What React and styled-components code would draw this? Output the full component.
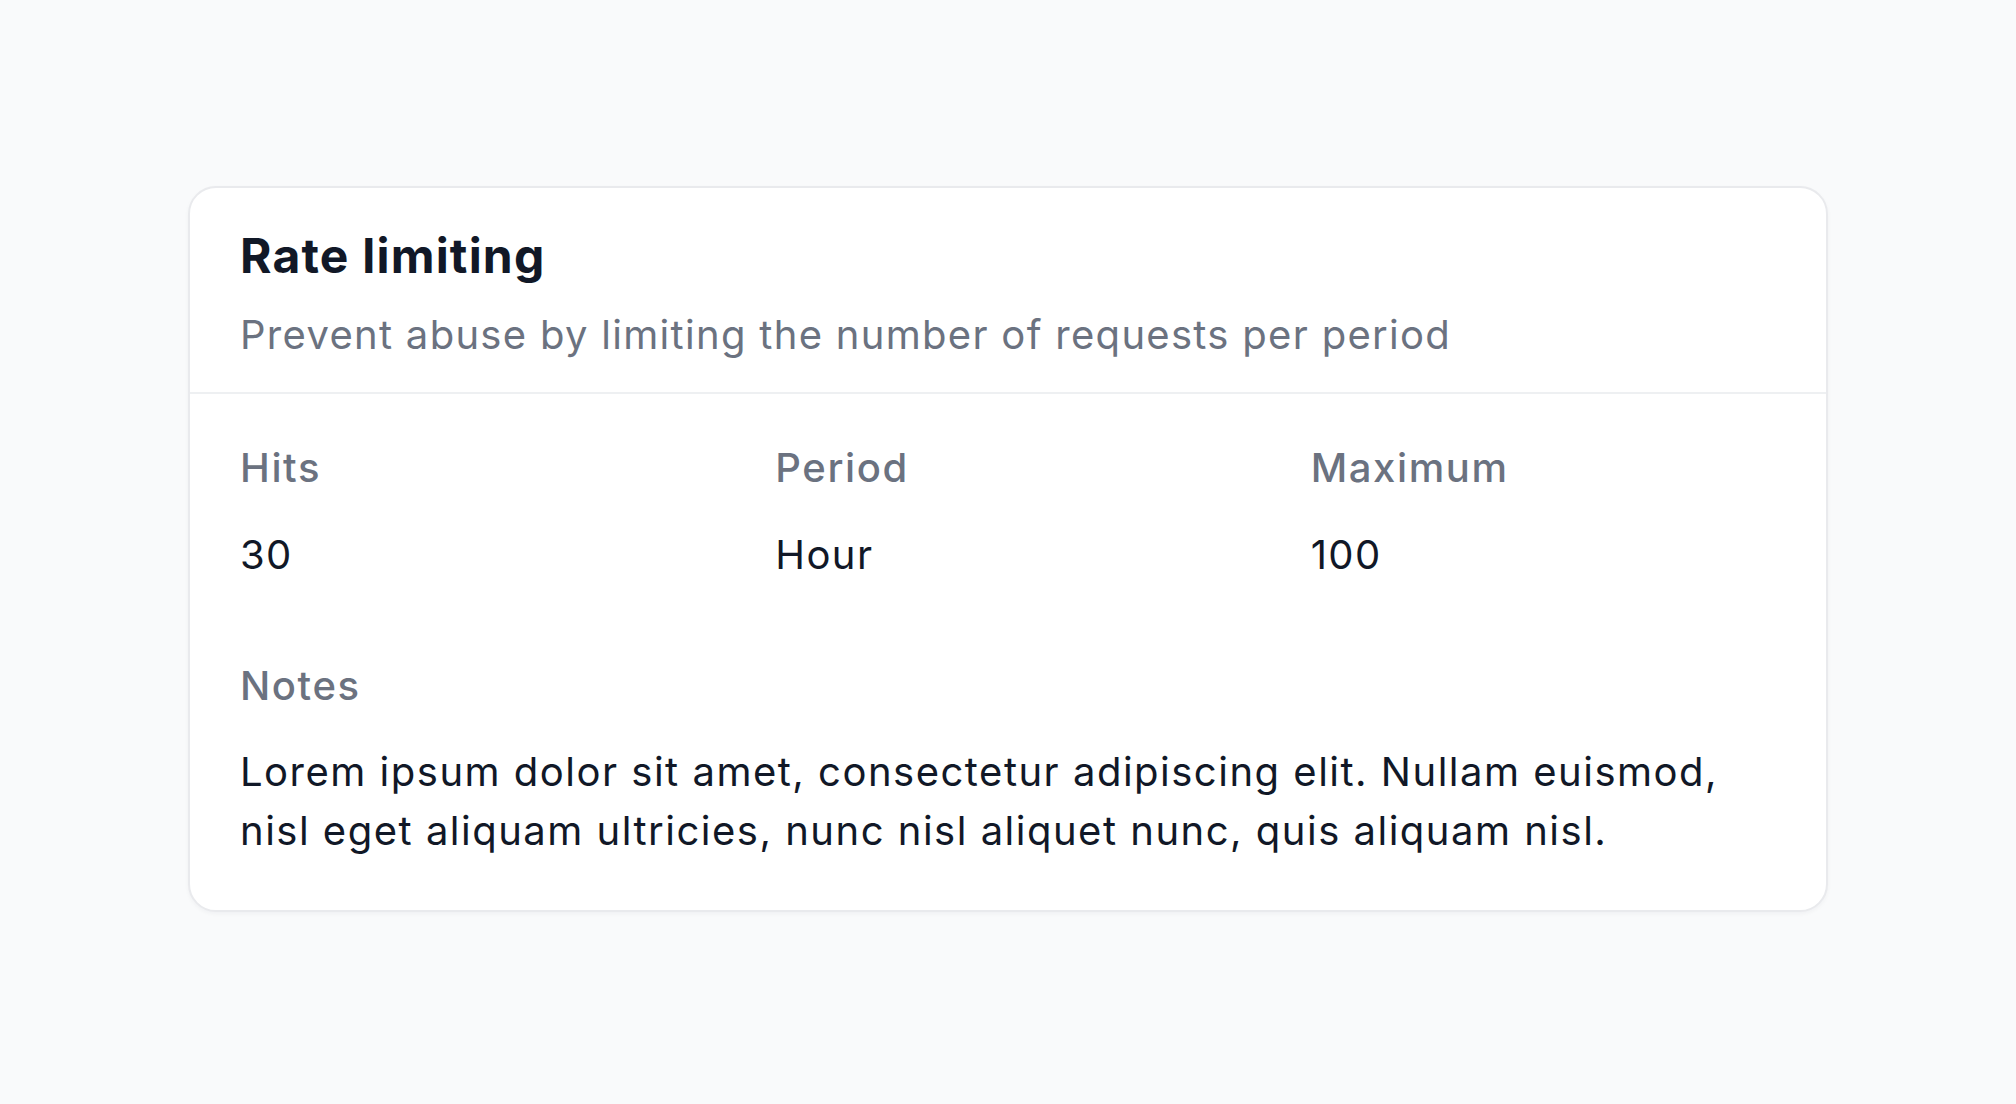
import React from 'react';
import styled, { createGlobalStyle } from 'styled-components';

const GlobalStyle = createGlobalStyle`
    html, body {
        margin: 0;
        padding: 0;
        background: #f9fafb;
    }
    body {
        font-family: Inter, "Noto Sans", "Liberation Sans", sans-serif;
    }
`;

const stats = [
    { label: 'Hits', value: '30' },
    { label: 'Period', value: 'Hour' },
    { label: 'Maximum', value: '100' },
];

const App = () => {
    return (
        <Page>
            <GlobalStyle />
            <Card>
                <Header>
                    <Title>Rate limiting</Title>
                    <Subtitle>Prevent abuse by limiting the number of requests per period</Subtitle>
                </Header>
                <Body>
                    <StatsGrid>
                        {stats.map((s) => (
                            <Stat key={s.label}>
                                <Label>{s.label}</Label>
                                <Value>{s.value}</Value>
                            </Stat>
                        ))}
                    </StatsGrid>
                    <Notes>
                        <Label>Notes</Label>
                        <NotesText>
                            Lorem ipsum dolor sit amet, consectetur adipiscing elit. Nullam euismod,
                            nisl eget aliquam ultricies, nunc nisl aliquet nunc, quis aliquam nisl.
                        </NotesText>
                    </Notes>
                </Body>
            </Card>
        </Page>
    );
};

const Page = styled.div`
    min-height: 100vh;
    display: flex;
    align-items: center;
    justify-content: center;
    box-sizing: border-box;
    padding-bottom: 6px;
`;

const Card = styled.div`
    width: 1640px;
    box-sizing: border-box;
    background: #ffffff;
    border: 2px solid #e9eaed;
    border-radius: 28px;
    box-shadow: 0 2px 4px rgba(17, 24, 39, 0.04);
    overflow: hidden;
`;

const Header = styled.div`
    padding: 39px 50px 28px;
    border-bottom: 2px solid #eef0f2;
    display: flex;
    flex-direction: column;
    gap: 21px;
`;

const Title = styled.h2`
    margin: 0;
    font-size: 48px;
    line-height: 58px;
    font-weight: 700;
    color: #111827;
    letter-spacing: 1.2px;
`;

const Subtitle = styled.p`
    margin: 0;
    font-size: 40px;
    line-height: 58px;
    color: #6b7280;
    letter-spacing: 1.3px;
`;

const Body = styled.div`
    padding: 46px 50px 50px;
    display: flex;
    flex-direction: column;
    gap: 75px;
`;

const StatsGrid = styled.div`
    display: grid;
    grid-template-columns: repeat(3, 1fr);
    column-gap: 70px;
`;

const Stat = styled.div`
    display: flex;
    flex-direction: column;
    gap: 31px;
`;

const Label = styled.div`
    font-size: 40px;
    line-height: 56px;
    font-weight: 500;
    color: #6b7280;
    letter-spacing: 1.6px;
`;

const Value = styled.div`
    font-size: 40px;
    line-height: 56px;
    color: #111827;
    letter-spacing: 1.4px;
`;

const Notes = styled.div`
    display: flex;
    flex-direction: column;
    gap: 28px;
`;

const NotesText = styled.p`
    margin: 0;
    font-size: 40px;
    line-height: 59px;
    color: #111827;
    letter-spacing: 1.5px;
`;

export default App;
